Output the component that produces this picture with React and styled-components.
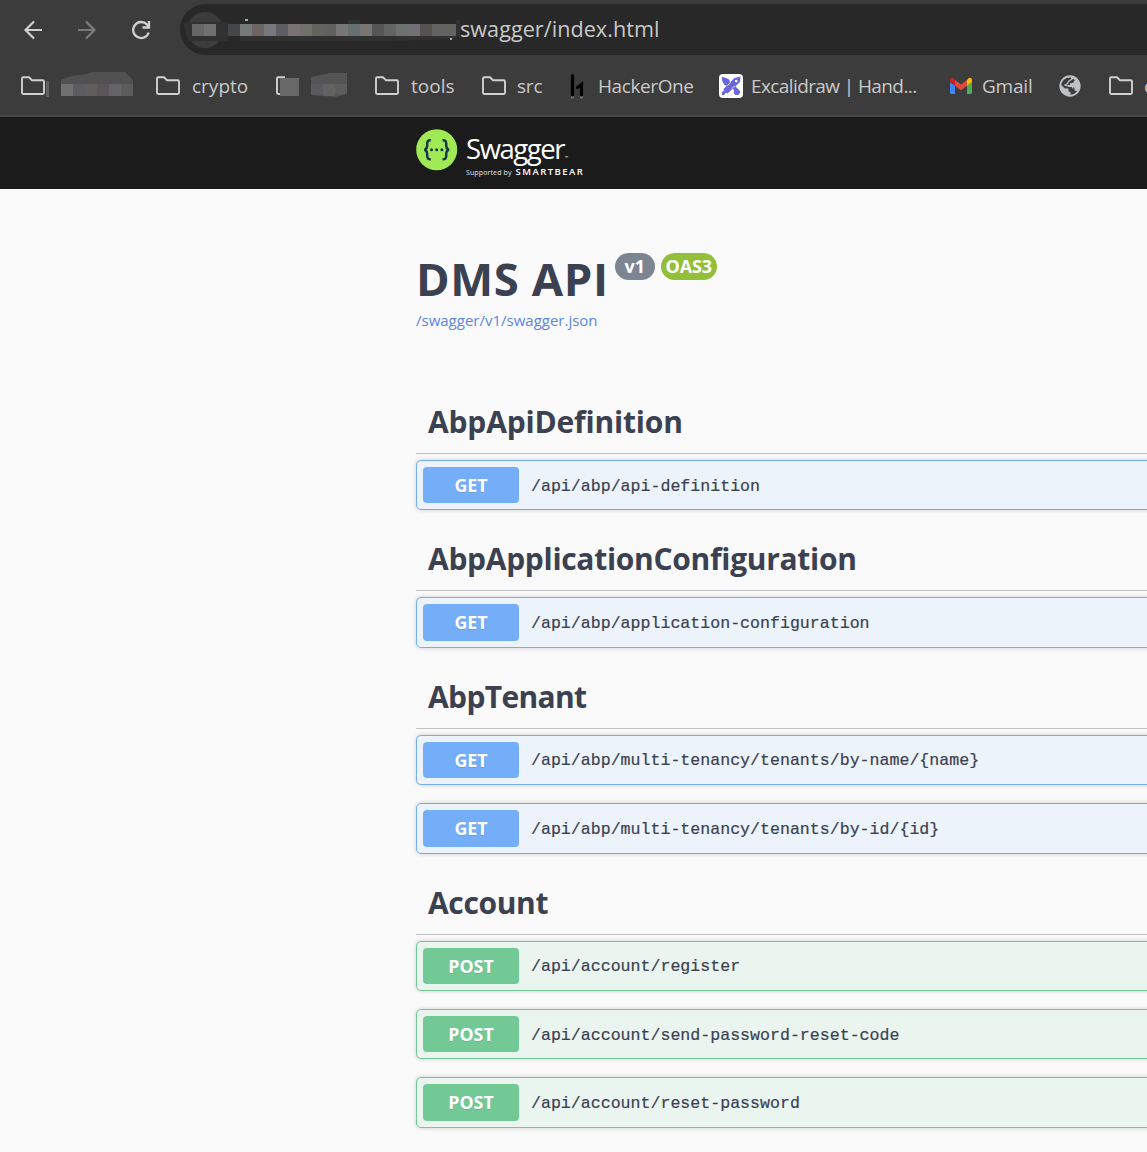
import React from "react";
import styled, { createGlobalStyle } from "styled-components";

const sans = '"Open Sans", "Noto Sans", sans-serif';

const Global = createGlobalStyle`
  * { box-sizing: border-box; }
  body { margin: 0; background: #fafafa; font-family: ${sans}; overflow: hidden; }
`;
const Page = styled.div`
  width: 1147px;
  height: 1152px;
  overflow: hidden;
  background: #fafafa;
`;
const Chrome = styled.header`
  height: 117px;
  background: #3c3c3c;
  border-bottom: 2px solid #474747;
  overflow: hidden;
`;
const Toolbar = styled.div`
  display: flex;
  align-items: center;
  height: 59px;
  padding-left: 20px;
`;
const NavButton = styled.span`
  display: flex;
  width: 54px;
  color: ${(p) => (p.$dim ? "#7b7b7b" : "#d0d0d0")};
`;
const AddressBar = styled.div`
  display: flex;
  align-items: center;
  flex: 1;
  height: 51px;
  margin: 0 -40px 1px -2px;
  border-radius: 26px 0 0 26px;
  background: #282828;
  svg { flex: none; }
`;
const Url = styled.span`
  color: #c9c9c9;
  font-size: 21.6px;
  line-height: 30px;
  letter-spacing: 0.04px;
  white-space: nowrap;
`;
const Bookmarks = styled.nav`
  display: flex;
  align-items: center;
  height: 54px;
  padding-left: 20px;
`;
const Bookmark = styled.span`
  display: flex;
  align-items: center;
  flex: none;
  gap: ${(p) => p.$gap || 11}px;
  width: ${(p) => p.$width}px;
  color: #c9c9c9;
  font-size: 19px;
  line-height: 28px;
  letter-spacing: ${(p) => p.$track || 0}px;
  white-space: nowrap;
  svg { flex: none; }
`;
const TopBar = styled.div`
  display: flex;
  align-items: flex-start;
  height: 72px;
  padding: 12px 0 0 416px;
  background: #1b1b1b;
  color: #fff;
`;
const Brand = styled.div`
  display: flex;
  flex-direction: column;
  margin-left: 8px;
`;
const BrandName = styled.span`
  height: 37px;
  font-size: 27.5px;
  line-height: 39px;
  letter-spacing: -1.45px;
  white-space: nowrap;
  small { margin-left: 1px; font-size: 4px; letter-spacing: 0; }
`;
const Support = styled.span`
  display: flex;
  align-items: baseline;
  gap: 4px;
  margin-top: -1px;
  color: #e4e4e4;
  font: 400 7px/13px ${sans};
  letter-spacing: 0.12px;
  white-space: nowrap;
  b { color: #fff; font-size: 9.5px; font-weight: 600; letter-spacing: 1.45px; }
`;
const Main = styled.main`
  padding-left: 416px;
  color: #3b4151;
`;
const Info = styled.section`
  height: 202px;
  padding-top: 58px;
`;
const Title = styled.h1`
  display: flex;
  align-items: flex-start;
  margin: 0;
  font-size: 45.5px;
  font-weight: 700;
  line-height: 62px;
  letter-spacing: 0.6px;
  white-space: nowrap;
`;
const Badge = styled.span`
  display: flex;
  align-items: center;
  justify-content: center;
  width: ${(p) => p.$width}px;
  height: 27px;
  margin: 6px 0 0 6px;
  border-radius: 14px;
  background: ${(p) => p.$color};
  color: #fff;
  font-size: 18px;
  line-height: 29px;
  letter-spacing: ${(p) => p.$track || 0}px;
`;
const SpecLink = styled.a`
  display: block;
  color: #5a87e0;
  font-size: 15px;
  line-height: 22px;
`;
const Heading = styled.h2`
  height: 63px;
  margin: 0 0 6px;
  padding: 9px 0 0 12px;
  border-bottom: 1px solid #c1c2c5;
  font-size: 30px;
  font-weight: 700;
  line-height: 44px;
  letter-spacing: ${(p) => p.$track || 0}px;
  white-space: nowrap;
`;
const Operation = styled.div`
  display: flex;
  align-items: center;
  height: 50.4px;
  margin: 0 -20px 18px 0;
  padding: 0 6px;
  border: 1px solid ${(p) => p.$color};
  border-radius: 5px;
  background: ${(p) => p.$tint};
  box-shadow: 0 0 4px rgba(0, 0, 0, 0.19);
`;
const Method = styled.span`
  width: 96px;
  height: 36.4px;
  border-radius: 4px;
  background: ${(p) => p.$color};
  color: #fff;
  font-size: 17.8px;
  font-weight: 700;
  line-height: 37px;
  text-align: center;
  text-shadow: 0 1px 0 rgba(0, 0, 0, 0.1);
`;
const Path = styled.code`
  margin: 2px 0 0 12px;
  font-family: "Liberation Mono", monospace;
  font-size: 16.6px;
  white-space: nowrap;
  -webkit-text-stroke: 0.2px #3b4151;
`;

const Folder = () => (
  <svg width="26" height="22" viewBox="0 0 26 22" fill="none" stroke="#d0d0d0" strokeWidth="1.900">
    <path d="M2 3.500Q2 2.300 3.200 2.300H9L12 5.200H22.800Q24 5.200 24 6.400V17.800Q24 19 22.800 19H3.200Q2 19 2 17.800Z" />
  </svg>
);
const LabelMask = () => (
  <svg width="90" height="28" viewBox="0 0 90 28">
    <rect x="0" y="9" width="3" height="16" fill="#606060" />
    <path d="M15 8Q25 3 35 3L47 0H79L87 8V24H15Z" fill="#515151" />
    <rect x="15" y="12" width="12" height="12" fill="#707070" />
    <rect x="27" y="12" width="12" height="12" fill="#5b5c5f" />
    <rect x="39" y="12" width="12" height="12" fill="#605d5b" />
    <rect x="51" y="12" width="12" height="12" fill="#5a5558" />
    <rect x="63" y="12" width="12" height="12" fill="#646468" />
    <rect x="75" y="12" width="12" height="12" fill="#5c5c5c" />
  </svg>
);
const MaskedFolder = () => (
  <svg width="73" height="28" viewBox="0 0 73 28">
    <path d="M10 5.300H3.200Q2 5.300 2 6.500V20.800Q2 22 3.200 22H10" fill="none" stroke="#d0d0d0" strokeWidth="1.900" />
    <rect x="5" y="6" width="19" height="18" fill="#686868" />
    <path d="M36 5L55 1H72V22L60 25L36 23Z" fill="#545454" />
    <rect x="36" y="12" width="12" height="11" fill="#59595e" />
    <rect x="48" y="12" width="12" height="12" fill="#626262" />
    <rect x="60" y="12" width="12" height="10" fill="#5d5d5d" />
  </svg>
);
const HackerOneIcon = () => (
  <svg width="18" height="26" viewBox="0 0 18 26" fill="none" strokeLinecap="round">
    <path d="M3.500 3V24M12.500 24V12" stroke="#777" strokeWidth="3" />
    <path d="M3.500 2.500V22M12.500 22V11.500L8.500 14.500" stroke="#000" strokeWidth="3.200" />
  </svg>
);
const ExcalidrawIcon = () => (
  <svg width="24" height="24" viewBox="0 0 24 24">
    <rect width="24" height="24" rx="4" fill="#fff" />
    <g fill="#6965db">
      <path d="M2.500 3Q8 3.500 10.500 6L11 9L8.500 12L5.500 11Q3 8 2.500 3Z" />
      <path d="M21.500 2.500L21 8L8.500 19.500L7 18.500L5 21H3V18L5 16.500L4.500 15L15.500 4Z" />
      <path d="M13.500 14L16 12L21 17L20.500 20L18 21Z" />
      <circle cx="17.700" cy="18.200" r="2.800" />
    </g>
    <circle cx="17.200" cy="7" r="1.300" fill="#fff" />
    <path d="M8.500 11.500L11.500 8.500M13 14.500L15.500 12" stroke="#fff" strokeWidth=".9" />
  </svg>
);
const GmailIcon = () => (
  <svg width="23" height="18" viewBox="0 0 23 18">
    <path d="M1 5L6 8.500V17H2.500Q1 17 1 15.500Z" fill="#4285f4" />
    <path d="M18 8.500L23 5V15.500Q23 17 21.500 17H18Z" fill="#4caf50" />
    <path d="M6 3L12 7.600L18 3V8.800L12 13.200L6 8.800Z" fill="#e04a3a" />
    <path d="M1 3Q1 .8 3 .8Q4 .8 6 3V8.800L1 5Z" fill="#c5221f" />
    <path d="M18 3Q20 .8 21 .8Q23 .8 23 3V5L18 8.800Z" fill="#fbbc04" />
  </svg>
);
const GlobeIcon = () => (
  <svg width="22" height="22" viewBox="0 0 22 22">
    <circle cx="11" cy="11" r="9.700" fill="#3c3c3c" stroke="#bdc1c6" strokeWidth="1.900" />
    <path d="M12.500 1.500Q20.500 3.500 20.500 11Q20.500 14.500 18.500 16.500Q17 15.500 15.500 15.500V13.500Q15.500 12 14 12H9V10H11V8H13Q15 8 15 6Q17 5 14 4H12Z" fill="#bdc1c6" />
    <path d="M1.500 9.500L6 13.500H9.500V16.500L11.500 17V20.500Q3 20.500 1.500 13Z" fill="#bdc1c6" />
    <path d="M7 2.500L12 1.500L13 4L9.500 6.500L8.500 8.500L6 10L9 11H13L14 13.500" fill="none" stroke="#bdc1c6" strokeWidth="1.200" />
  </svg>
);
const SwaggerMark = () => (
  <svg width="42" height="42" viewBox="0 0 42 42">
    <circle cx="20.700" cy="20.700" r="20.500" fill="#9fea55" />
    <path d="M14.800 11.200Q11.200 10.800 11.200 14.500Q11.500 20.500 8.200 20.700Q11.500 21 11.200 27Q11.200 30.600 14.800 30.200M26.600 11.200Q30.200 10.800 30.200 14.500Q29.900 20.500 33.200 20.700Q29.900 21 30.200 27Q30.200 30.600 26.600 30.200" fill="none" stroke="#173647" strokeWidth="2.500" />
    <g fill="#173647"><circle cx="15.500" cy="20.700" r="1.500" /><circle cx="20.700" cy="20.700" r="1.500" /><circle cx="25.900" cy="20.700" r="1.500" /></g>
  </svg>
);

const get = { $color: "#74adf8", $tint: "#ecf3fb" };
const post = { $color: "#72c996", $tint: "#ebf5f0" };
const groups = [
  { name: "AbpApiDefinition", track: -0.18, ops: [["GET", "/api/abp/api-definition"]] },
  { name: "AbpApplicationConfiguration", track: -0.3, ops: [["GET", "/api/abp/application-configuration"]] },
  {
    name: "AbpTenant",
    track: -0.65,
    ops: [
      ["GET", "/api/abp/multi-tenancy/tenants/by-name/{name}"],
      ["GET", "/api/abp/multi-tenancy/tenants/by-id/{id}"],
    ],
  },
  {
    name: "Account",
    track: -0.35,
    ops: [
      ["POST", "/api/account/register"],
      ["POST", "/api/account/send-password-reset-code"],
      ["POST", "/api/account/reset-password"],
    ],
  },
];
const urlTiles = ["#434749", "#747b7a", "#6e6463", "#77777d", "#5f5c65", "#7b7274", "#71706a", "#62635b", "#60605d", "#777777", "#657073", "#777670", "#555556", "#626463", "#6c7270", "#707076", "#575050", "#636461", "#636461"];

export default function App() {
  return (
    <Page>
      <Global />
      <Chrome>
        <Toolbar>
          <NavButton>
            <svg width="26" height="26" viewBox="0 0 26 26" fill="none" stroke="currentColor" strokeWidth="2.200"><path d="M22 13H5.500M14 4.500L5.500 13L14 21.500" /></svg>
          </NavButton>
          <NavButton $dim>
            <svg width="26" height="26" viewBox="0 0 26 26" fill="none" stroke="currentColor" strokeWidth="2.200"><path d="M4 13H20.500M12 4.500L20.500 13L12 21.500" /></svg>
          </NavButton>
          <NavButton>
            <svg width="26" height="26" viewBox="0 0 26 26" fill="none" stroke="currentColor" strokeWidth="2.300"><path d="M20.800 15.500A8 8 0 1 1 19 7.500L21 10M21 4V10.500H14.500" /></svg>
          </NavButton>
          <AddressBar>
            <svg width="280" height="51" viewBox="0 0 280 51">
              <circle cx="25" cy="26" r="18" fill="#3c3c3c" />
              <path d="M3 18H48V37H8Z" fill="#303030" />
              <path d="M12 20H24V32H12Z" fill="#666" />
              <path d="M24 20H36V32H24Z" fill="#707070" />
              <path d="M60 32H240L276 32V35L210 37H60Z" fill="#313030" />
              <path d="M168 16H180V20H168ZM276 16H282V32H276Z" fill="#313131" />
              {urlTiles.map((c, i) => <rect key={i} x={48 + i * 12} y="20" width="12" height="12" fill={c} />)}
              <rect x="36" y="20" width="12" height="12" fill="#323232" />
              <path d="M65 16H68M270 35H272" stroke="#d5d5d5" strokeWidth="1.300" />
            </svg>
            <Url>swagger/index.html</Url>
          </AddressBar>
        </Toolbar>
        <Bookmarks>
          <Bookmark $width={135} $gap={0.01}><Folder /><LabelMask /></Bookmark>
          <Bookmark $width={120}><Folder />crypto</Bookmark>
          <Bookmark $width={99}><MaskedFolder /></Bookmark>
          <Bookmark $width={107}><Folder />tools</Bookmark>
          <Bookmark $width={88} $gap={10} $track={-0.2}><Folder />src</Bookmark>
          <Bookmark $width={150} $track={-0.4}><HackerOneIcon />HackerOne</Bookmark>
          <Bookmark $width={230} $gap={8} $track={-0.6}><ExcalidrawIcon />Excalidraw | Hand...</Bookmark>
          <Bookmark $width={110} $gap={10} $track={-0.2}><GmailIcon />Gmail</Bookmark>
          <Bookmark $width={49}><GlobeIcon /></Bookmark>
          <Bookmark $width={60} $gap={10}><Folder />c</Bookmark>
        </Bookmarks>
      </Chrome>
      <TopBar>
        <SwaggerMark />
        <Brand>
          <BrandName>Swagger<small>™</small></BrandName>
          <Support>Supported by <b>SMARTBEAR</b></Support>
        </Brand>
      </TopBar>
      <Main>
        <Info>
          <Title>
            DMS API
            <Badge $width={40} $color="#7d8492">v1</Badge>
            <Badge $width={56} $color="#93bf3a" $track={-0.2}>OAS3</Badge>
          </Title>
          <SpecLink>/swagger/v1/swagger.json</SpecLink>
        </Info>
        {groups.map((g) => (
          <section key={g.name}>
            <Heading $track={g.track}>{g.name}</Heading>
            {g.ops.map(([method, path]) => {
              const tone = method === "GET" ? get : post;
              return (
                <Operation key={path} {...tone}>
                  <Method $color={tone.$color}>{method}</Method>
                  <Path>{path}</Path>
                </Operation>
              );
            })}
          </section>
        ))}
      </Main>
    </Page>
  );
}
